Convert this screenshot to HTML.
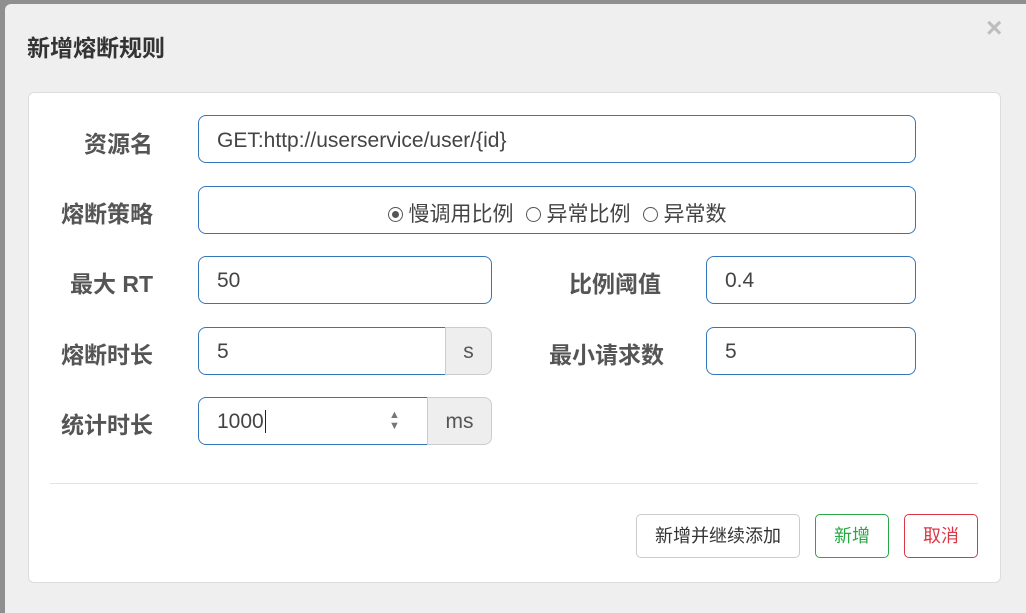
<!DOCTYPE html><html><head><meta charset="utf-8"><style>
body{margin:0;width:1026px;height:613px;background:#8f8f8f;position:relative;overflow:hidden;font-family:"Liberation Sans","Noto Sans CJK SC",sans-serif}
.dlg{position:absolute;left:5px;top:4px;width:1021px;height:609px;background:#efefef;border-radius:6px 0 0 0}
.t{position:absolute;left:27px;top:29px;font-size:23px;font-weight:bold;color:#333}
.x{position:absolute;left:986px;top:12px;font-size:28px;font-weight:bold;color:#bdbdbd}
.card{position:absolute;left:28px;top:92px;width:971px;height:489px;background:#fff;border:1px solid #ddd;border-radius:6px}
.lab{position:absolute;font-size:23px;font-weight:bold;color:#555;text-align:right;width:200px;line-height:28px}
.in{position:absolute;box-sizing:border-box;border:1px solid #3477b8;border-radius:8px;background:#fff;font-size:21px;color:#444;padding-left:18px;line-height:48px}
.ad{position:absolute;box-sizing:border-box;border:1px solid #ccc;background:#eee;border-radius:0 8px 8px 0;font-size:21px;color:#555;text-align:center;line-height:48px}
.btn{position:absolute;top:514px;height:44px;box-sizing:border-box;border-radius:5px;font-size:18px;text-align:center;line-height:42px;background:#fff}
.r{display:inline-block;width:15px;height:15px;border:1px solid #555;border-radius:50%;vertical-align:-1px;margin-right:6px;margin-left:12px;position:relative;box-sizing:border-box}
</style></head><body>
<div class="dlg"></div>
<div class="t">新增熔断规则</div>
<div class="x">×</div>
<div class="card"></div>
<div class="lab" style="left:-47px;top:130px">资源名</div>
<div class="lab" style="left:-47px;top:200px">熔断策略</div>
<div class="lab" style="left:-47px;top:270px">最大 RT</div>
<div class="lab" style="left:-47px;top:341px">熔断时长</div>
<div class="lab" style="left:-47px;top:411px">统计时长</div>
<div class="lab" style="left:461px;top:270px">比例阈值</div>
<div class="lab" style="left:464px;top:341px">最小请求数</div>
<div class="in" style="left:198px;top:115px;width:718px;height:48px;line-height:50px">GET:http://userservice/user/{id}</div>
<div class="in" style="left:198px;top:186px;width:718px;height:48px;padding:0;text-align:center;line-height:56px"><span class="r" style="margin-left:0"><span style="position:absolute;left:3px;top:3px;width:7px;height:7px;border-radius:50%;background:#555"></span></span>慢调用比例<span class="r"></span>异常比例<span class="r"></span>异常数</div>
<div class="in" style="left:198px;top:256px;width:294px;height:48px">50</div>
<div class="in" style="left:706px;top:256px;width:210px;height:48px">0.4</div>
<div class="in" style="left:198px;top:327px;width:248px;height:48px;border-radius:8px 0 0 8px">5</div>
<div class="ad" style="left:445px;top:327px;width:47px;height:48px">s</div>
<div class="in" style="left:706px;top:327px;width:210px;height:48px">5</div>
<div class="in" style="left:198px;top:397px;width:230px;height:48px;border-radius:8px 0 0 8px">1000<span style="border-left:1px solid #222;margin-left:1px"></span><span style="position:absolute;left:190px;top:0;font-size:11px;color:#777;line-height:11px;padding-top:12px">▲<br>▼</span></div>
<div class="ad" style="left:427px;top:397px;width:65px;height:48px">ms</div>
<div style="position:absolute;left:50px;top:483px;width:928px;height:1px;background:#e3e3e3"></div>
<div class="btn" style="left:636px;width:164px;border:1px solid #ccc;color:#333">新增并继续添加</div>
<div class="btn" style="left:815px;width:74px;border:1px solid #28a745;color:#28a745">新增</div>
<div class="btn" style="left:904px;width:74px;border:1px solid #dc3545;color:#dc3545">取消</div>
</body></html>
